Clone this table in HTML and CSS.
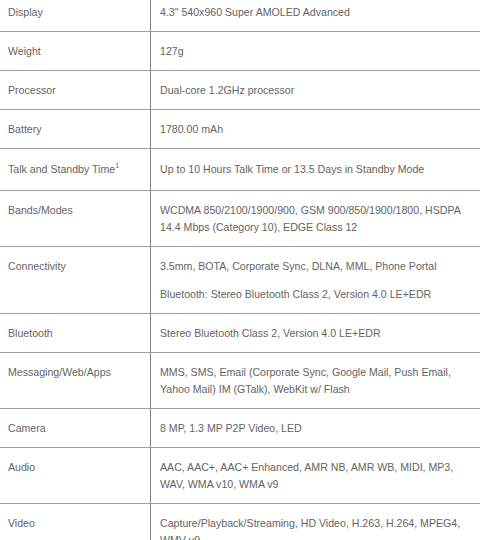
FILE: index.html
```html
<!DOCTYPE html>
<html lang="en">
<head>
<meta charset="utf-8">
<title>Specifications</title>
<link rel="stylesheet" href="styles.css">
</head>
<body>
<table class="specs">
  <tbody>
    <tr><th>Display</th><td>4.3" 540x960 Super AMOLED Advanced</td></tr>
    <tr><th>Weight</th><td>127g</td></tr>
    <tr><th>Processor</th><td>Dual-core 1.2GHz processor</td></tr>
    <tr><th>Battery</th><td>1780.00 mAh</td></tr>
    <tr class="row-note"><th>Talk and Standby Time<sup class="note">1</sup></th><td>Up to 10 Hours Talk Time or 13.5 Days in Standby Mode</td></tr>
    <tr><th>Bands/Modes</th><td>WCDMA 850/2100/1900/900, GSM 900/850/1900/1800, HSDPA 14.4 Mbps (Category 10), EDGE Class 12</td></tr>
    <tr><th>Connectivity</th><td><p class="para">3.5mm, BOTA, Corporate Sync, DLNA, MML, Phone Portal</p><p class="para">Bluetooth: Stereo Bluetooth Class 2, Version 4.0 LE+EDR</p></td></tr>
    <tr><th>Bluetooth</th><td>Stereo Bluetooth Class 2, Version 4.0 LE+EDR</td></tr>
    <tr><th>Messaging/Web/Apps</th><td>MMS, SMS, Email (Corporate Sync, Google Mail, Push Email, Yahoo Mail) IM (GTalk), WebKit w/ Flash</td></tr>
    <tr><th>Camera</th><td>8 MP, 1.3 MP P2P Video, LED</td></tr>
    <tr><th>Audio</th><td>AAC, AAC+, AAC+ Enhanced, AMR NB, AMR WB, MIDI, MP3, WAV, WMA v10, WMA v9</td></tr>
    <tr><th>Video</th><td>Capture/Playback/Streaming, HD Video, H.263, H.264, MPEG4, WMV v9</td></tr>
  </tbody>
</table>
</body>
</html>
```
FILE: styles.css
```css
html, body {
  margin: 0;
  padding: 0;
  background: #ffffff;
}
body {
  overflow: hidden;
  font-family: "Liberation Sans", Arial, sans-serif;
  font-size: 10.6px;
  color: #646464;
}
.specs {
  border-collapse: collapse;
  width: 481px;
  margin-top: -8px;
  table-layout: fixed;
}
.specs th,
.specs td {
  border-top: 1px solid #9f9f9f;
  border-bottom: 1px solid #9f9f9f;
  vertical-align: top;
  text-align: left;
  font-weight: normal;
  line-height: 17px;
  padding: 11px 10px 10px 10px;
}
.specs th {
  width: 142px;
  padding-left: 8px;
  padding-right: 0;
  border-right: 1px solid #808080;
}
.specs td {
  padding-left: 9px;
  padding-right: 14px;
}
.specs .row-note th,
.specs .row-note td {
  padding-top: 12px;
  padding-bottom: 12px;
}
.note {
  font-size: 7px;
  line-height: 0;
  vertical-align: 5px;
}
.para {
  margin: 0;
}
.para + .para {
  margin-top: 11px;
}
```
